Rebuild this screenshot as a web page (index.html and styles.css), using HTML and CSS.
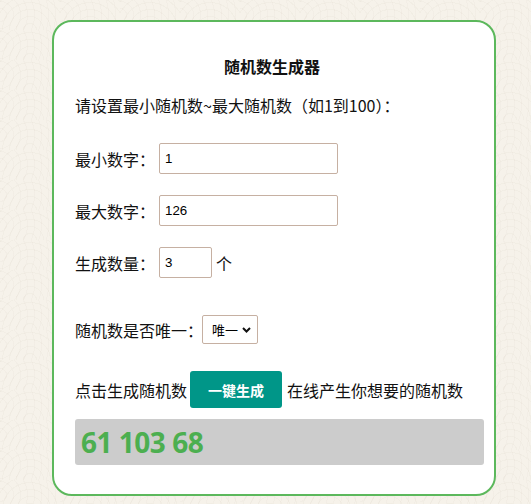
FILE: index.html
```html
<!DOCTYPE html>
<html lang="zh-CN">
<head>
  <meta charset="UTF-8" />
  <meta name="viewport" content="width=device-width, initial-scale=1.0" />
  <title>随机数生成器</title>
  <link rel="stylesheet" href="styles.css">
</head>
<body>
  <div class="card">
    <h2>随机数生成器</h2>
    <p class="intro">请设置最小随机数~最大随机数（如1到100）：</p>
    <div class="row">
      <label for="min">最小数字：</label>
      <input type="text" id="min" class="num" value="1">
    </div>
    <div class="row">
      <label for="max">最大数字：</label>
      <input type="text" id="max" class="num" value="126">
    </div>
    <div class="row">
      <label for="count">生成数量：</label>
      <input type="text" id="count" class="num short" value="3">
      <span>个</span>
    </div>
    <div class="row row-select">
      <label for="unique">随机数是否唯一：</label>
      <div class="select-wrap">
        <select id="unique">
          <option value="1">唯一</option>
          <option value="0">不唯一</option>
        </select>
        <svg class="chevron" width="9" height="6" viewBox="0 0 9 6"><path d="M1 1 4.5 4.5 8 1" fill="none" stroke="#111" stroke-width="2"/></svg>
      </div>
    </div>
    <div class="row row-go">
      <span>点击生成随机数</span>
      <button type="button" id="go">一键生成</button>
      <span>在线产生你想要的随机数</span>
    </div>
    <div class="result" id="result">61 103 68</div>
  </div>

  <script>
    document.getElementById('go').addEventListener('click', function () {
      let min = parseInt(document.getElementById('min').value, 10) || 0;
      let max = parseInt(document.getElementById('max').value, 10) || 0;
      const count = parseInt(document.getElementById('count').value, 10) || 1;
      const unique = document.getElementById('unique').value === '1';
      if (min > max) [min, max] = [max, min];

      const out = [];
      let tries = 0;
      while (out.length < count && tries < 10000) {
        tries++;
        const n = min + Math.floor(Math.random() * (max - min + 1));
        if (unique && out.includes(n)) continue;
        out.push(n);
      }
      document.getElementById('result').textContent = out.join(' ');
    });
  </script>
</body>
</html>
```

FILE: styles.css
```css
body {
  margin: 0;
  padding: 20px 0 8px;
  background-color: #f6f2ea;
  background-image:
    repeating-radial-gradient(circle at 50% 100%, transparent 0 6px, rgba(150, 130, 100, 0.045) 6px 7px),
    repeating-radial-gradient(circle at 0 50%, transparent 0 6px, rgba(150, 130, 100, 0.035) 6px 7px);
  background-size: 60px 30px, 60px 30px;
  font-family: "Noto Sans CJK SC", "Noto Sans", sans-serif;
  color: #111;
  font-size: 16px;
}
.card {
  box-sizing: border-box;
  width: 444px;
  margin-left: 52px;
  padding: 33px 10px 29px 21px;
  background: #fff;
  border: 2px solid #5cb85c;
  border-radius: 20px;
}
h2 {
  margin: 0 15px 0 0;
  text-align: center;
  font-size: 16px;
  line-height: 22px;
  font-weight: bold;
}
.intro {
  margin: 16px 0 0;
  line-height: 24px;
}
.row {
  display: flex;
  align-items: center;
  gap: 4px;
  margin-top: 21px;
}
.intro + .row {
  margin-top: 26px;
}
.num {
  box-sizing: border-box;
  width: 179px;
  height: 31px;
  padding: 0 5px;
  border: 1px solid #c6b0a2;
  border-radius: 2px;
  font-family: "Liberation Sans", Arial, sans-serif;
  font-size: 13.3px;
  color: #000;
}
.num.short {
  width: 53px;
}
.row-select {
  margin-top: 37px;
  gap: 0;
}
.select-wrap {
  position: relative;
  margin-left: -1px;
}
select {
  box-sizing: border-box;
  appearance: none;
  width: 56px;
  height: 29px;
  padding: 0 0 0 9px;
  border: 1px solid #c6b0a2;
  border-radius: 2px;
  background: #fff;
  font-family: "Noto Sans CJK SC", sans-serif;
  font-size: 13px;
  color: #000;
}
.chevron {
  position: absolute;
  right: 7px;
  top: 12px;
  pointer-events: none;
}
.row-go {
  margin-top: 27px;
  gap: 3px;
}
button {
  width: 92px;
  height: 37px;
  margin-right: 2px;
  border: none;
  border-radius: 3px;
  background-color: #009688;
  color: #fff;
  font-family: "Noto Sans CJK SC", sans-serif;
  font-size: 14px;
  font-weight: bold;
  cursor: pointer;
}
.result {
  margin-top: 11px;
  height: 46px;
  padding-left: 6px;
  border-radius: 3px;
  background-color: #cccccc;
  color: #4caf50;
  font-family: "Noto Sans", sans-serif;
  font-size: 28px;
  font-weight: bold;
  line-height: 46px;
  letter-spacing: -0.5px;
}
```
